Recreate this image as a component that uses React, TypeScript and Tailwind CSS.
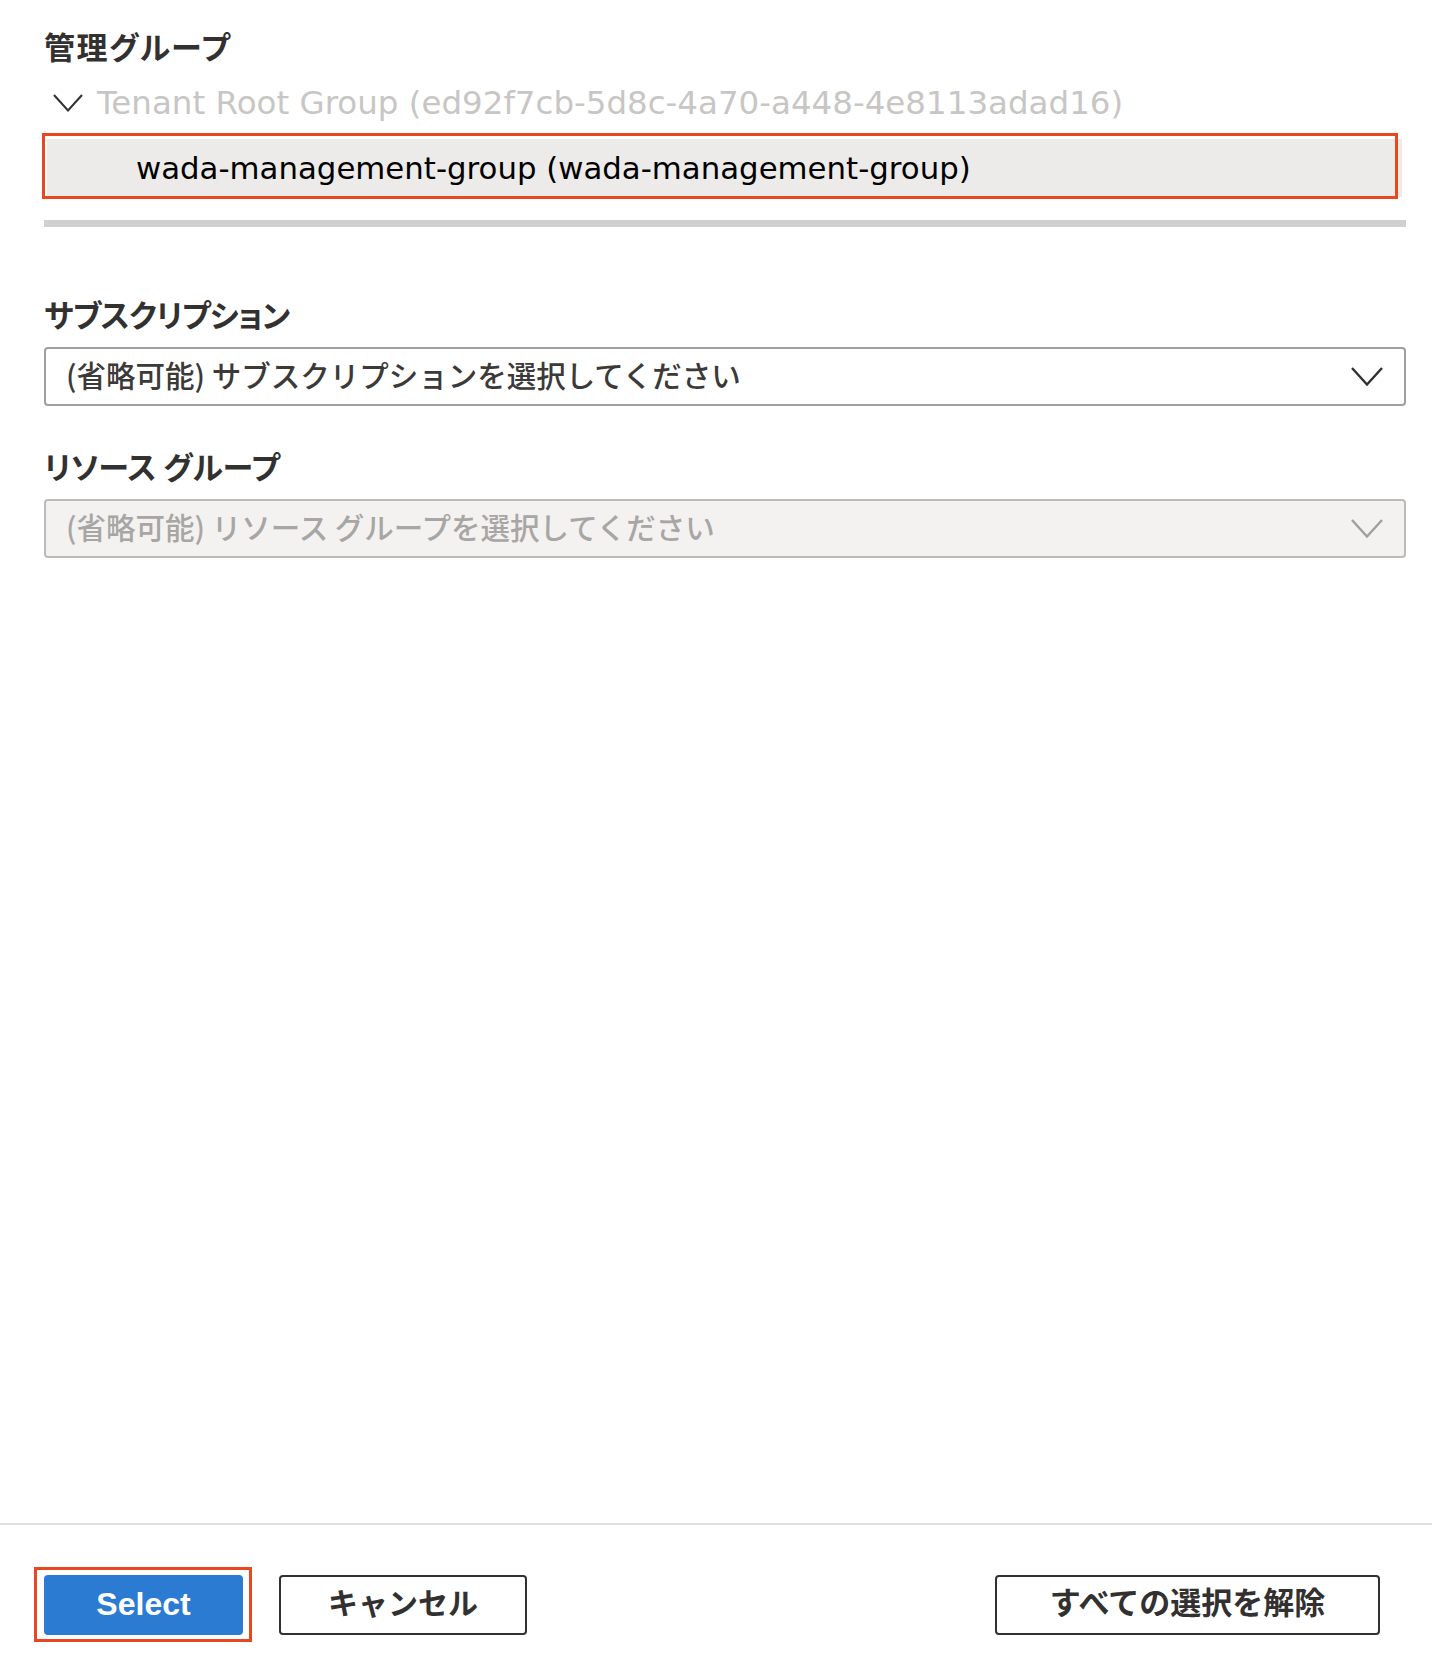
import React from 'react'

const jp = "font-['Noto_Sans_CJK_JP',sans-serif]"
const latin = "font-['DejaVu_Sans','Noto_Sans_CJK_JP',sans-serif]"

const Chevron: React.FC<{ w: number; h: number; color: string; sw?: number }> = ({ w, h, color, sw = 2 }) => (
  <svg width={w} height={h} viewBox={`0 0 ${w} ${h}`} fill="none">
    <polyline
      points={`1,1 ${w / 2},${h - 1.5} ${w - 1},1`}
      stroke={color}
      strokeWidth={sw}
      strokeLinejoin="miter"
    />
  </svg>
)

type DropdownProps = {
  placeholder: string
  disabled?: boolean
}

const Dropdown: React.FC<DropdownProps> = ({ placeholder, disabled }) => (
  <div
    className={
      disabled
        ? 'flex h-[59px] items-center justify-between rounded-[4px] border-2 border-[#bdbbb9] bg-[#f3f2f1] pr-[21px] pl-[20px]'
        : 'flex h-[59px] items-center justify-between rounded-[4px] border-2 border-[#a19f9d] bg-white pr-[21px] pl-[20px]'
    }
  >
    <span
      className={
        disabled
          ? `${jp} pb-[3px] text-[29.5px] leading-none font-medium text-[#a8a6a4]`
          : `${jp} pb-[3px] text-[29.5px] leading-none font-medium text-[#3b3a39]`
      }
    >
      {placeholder}
    </span>
    <Chevron w={32} h={19} color={disabled ? '#a19f9d' : '#323130'} sw={2.4} />
  </div>
)

const Label: React.FC<{ text: string; className?: string }> = ({ text, className }) => (
  <div
    className={`${jp} text-[31px] leading-[40px] font-bold text-[#323130] [font-feature-settings:'palt'] ${className ?? ''}`}
  >
    {text}
  </div>
)

export default function App() {
  return (
    <div className="flex h-[1658px] w-[1432px] flex-col overflow-hidden bg-white">
      <main className="flex flex-1 flex-col pt-[26px] pr-[26px] pl-[44px]">
        <Label text="管理グループ" className="tracking-[1.5px]" />

        <div className="mt-[9px] flex h-[56px] items-center">
          <div className="ml-[9px] flex w-[44px] items-center">
            <Chevron w={30} h={18} color="#323130" sw={2} />
          </div>
          <span className={`${latin} text-[32.5px] leading-none text-[#c8c6c4]`}>
            Tenant Root Group (ed92f7cb-5d8c-4a70-a448-4e8113adad16)
          </span>
        </div>

        <div className="relative mt-[8px] mr-[4px] ml-[3px] flex h-[58px] items-center bg-[#edebe9] pl-[89px]">
          <span className={`${latin} text-[30.8px] leading-none text-[#000000]`}>
            wada-management-group (wada-management-group)
          </span>
          <div className="pointer-events-none absolute -top-[6px] right-[4px] -bottom-[2px] -left-[5px] border-[3px] border-[#e8471f]" />
        </div>

        <div className="mt-[23px] h-[7px] bg-[#d2d0ce]" />

        <Label text="サブスクリプション" className="mt-[67px] tracking-[-0.8px]" />
        <div className="mt-[13px]">
          <Dropdown placeholder="(省略可能) サブスクリプションを選択してください" />
        </div>

        <Label text="リソース グループ" className="mt-[40px]" />
        <div className="mt-[13px]">
          <Dropdown placeholder="(省略可能) リソース グループを選択してください" disabled />
        </div>
      </main>

      <footer className="flex h-[135px] items-start border-t-2 border-[#e1dfdd] pt-[50px] pr-[52px] pl-[44px]">
        <div className="relative">
          <button className="flex h-[60px] w-[199px] items-center justify-center rounded-[4px] bg-[#2b7bd3] pb-[3px] font-['Liberation_Sans',sans-serif] text-[32px] font-bold text-white">
            Select
          </button>
          <div className="pointer-events-none absolute -top-[8px] -right-[9px] -bottom-[7px] -left-[10px] border-[3px] border-[#e8471f]" />
        </div>
        <button
          className={`${jp} ml-[36px] flex h-[60px] w-[248px] items-center justify-center rounded-[4px] border-2 border-[#323130] bg-white pb-[9px] text-[30px] leading-none font-bold text-[#323130]`}
        >
          キャンセル
        </button>
        <button
          className={`${jp} ml-auto flex h-[60px] w-[385px] items-center justify-center rounded-[4px] border-2 border-[#323130] bg-white pb-[9px] text-[31px] leading-none font-bold text-[#323130]`}
        >
          すべての選択を解除
        </button>
      </footer>
    </div>
  )
}
